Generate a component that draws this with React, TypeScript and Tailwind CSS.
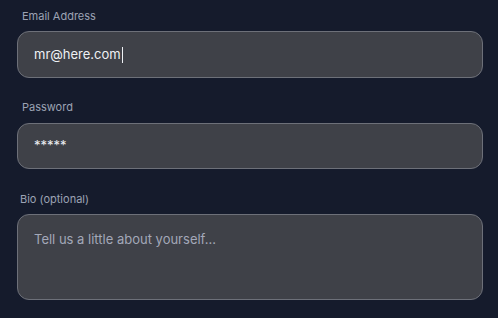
export default function App() {
  return (
    <div
      className="w-[498px] h-[318px] overflow-hidden bg-[#151b2c] pl-[17px] pr-[15px] pt-[8px]"
      style={{ fontFamily: "Inter, 'Noto Sans', sans-serif" }}
    >
      <div className="flex flex-col">
        <label className="pl-[5px] text-[11px] leading-4 text-[#9ca3b4]">Email Address</label>
        <div className="mt-[7px] h-[47px] flex items-center rounded-xl border border-[#6d7079] bg-[#3f4148] px-4 text-[13px] text-[#eef0f4]">
          <span>mr@here.com</span>
          <span className="ml-[1px] inline-block w-px h-[16px] bg-[#eef0f4]" />
        </div>

        <label className="mt-[21px] pl-[5px] text-[11px] leading-4 text-[#9ca3b4]">Password</label>
        <div className="mt-[8px] h-[46px] flex items-center rounded-xl border border-[#6d7079] bg-[#3f4148] px-4 text-[13px] text-[#eef0f4]">
          <span>*****</span>
        </div>

        <label className="mt-[22px] pl-[3px] text-[11px] leading-4 text-[#9ca3b4]">Bio (optional)</label>
        <div className="mt-[7px] h-[86px] rounded-xl border border-[#6d7079] bg-[#3f4148] px-4 pt-[14px] text-[13px] leading-5 text-[#a3a8b8]">
          Tell us a little about yourself...
        </div>
      </div>
    </div>
  );
}
